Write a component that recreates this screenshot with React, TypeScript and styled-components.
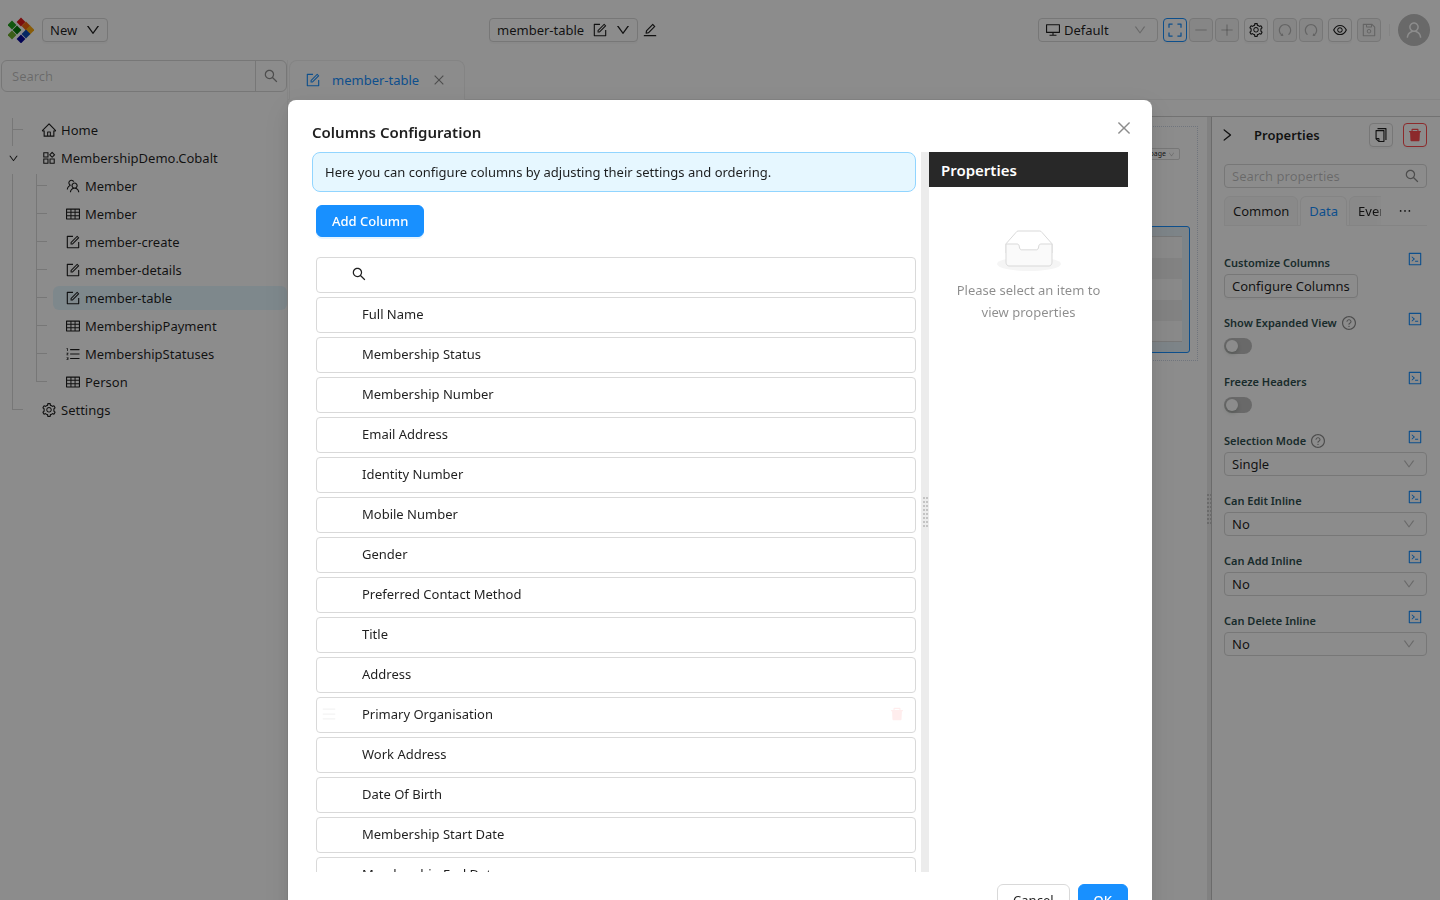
import React, { ReactNode } from "react";
import styled, { createGlobalStyle, css } from "styled-components";
import {
  AiFillDelete,
  AiOutlineClose,
  AiOutlineCode,
  AiOutlineCopy,
  AiOutlineDesktop,
  AiOutlineDown,
  AiOutlineEdit,
  AiOutlineEllipsis,
  AiOutlineExpand,
  AiOutlineEye,
  AiOutlineForm,
  AiOutlineHome,
  AiOutlineMenu,
  AiOutlineMinus,
  AiOutlineOrderedList,
  AiOutlinePlus,
  AiOutlineProduct,
  AiOutlineQuestionCircle,
  AiOutlineRedo,
  AiOutlineRight,
  AiOutlineSave,
  AiOutlineSearch,
  AiOutlineSetting,
  AiOutlineTable,
  AiOutlineTeam,
  AiOutlineUndo,
  AiOutlineUser,
} from "react-icons/ai";

const blue = "#1890ff";
const red = "#ff4d4f";
const line = "#d9d9d9";
const muted = "rgba(0, 0, 0, 0.45)";
const faint = "rgba(0, 0, 0, 0.25)";

const GlobalStyle = createGlobalStyle`
  *, *::before, *::after { box-sizing: border-box; }
  body {
    margin: 0;
    background: #fff;
    color: rgba(0, 0, 0, 0.88);
    font-family: "Segoe UI", "Noto Sans", sans-serif;
    font-size: 13px;
    line-height: 22px;
  }
  button, input, select { font: inherit; color: inherit; }
  button { cursor: pointer; }
  svg { display: block; flex: none; }
  /* the icon glyphs carry an empty rim of one pixel */
  svg[stroke="currentColor"] { margin: -1px; }
`;

/* ---------- shell ---------- */

const Shell = styled.div`
  display: flex;
  flex-direction: column;
  height: 100vh;
  overflow: hidden;
`;

const Header = styled.header`
  display: grid;
  grid-template-columns: 1fr 1fr 1fr;
  align-items: center;
  height: 60px;
  flex: none;
`;

const HeaderGroup = styled.div<{ $end?: boolean; $inset: number }>`
  display: flex;
  align-items: center;
  gap: 5px;
  justify-content: ${(p) => (p.$end ? "flex-end" : "flex-start")};
  padding: 0 ${(p) => p.$inset}px;
`;

const Logo = styled.svg`
  margin-right: 3px;
`;

const SmallButton = styled.button<{ $tone?: "primary" | "danger"; $square?: boolean }>`
  display: inline-flex;
  align-items: center;
  justify-content: center;
  gap: 9px;
  height: 24px;
  padding: 0 7px;
  border: 1px solid ${line};
  border-radius: 4px;
  background: #fff;
  box-shadow: 0 2px 0 rgba(0, 0, 0, 0.02);
  white-space: nowrap;
  ${(p) => p.$square && css`width: 24px; padding: 0;`}
  ${(p) => p.$tone === "primary" && css`border-color: ${blue}; color: ${blue};`}
  ${(p) => p.$tone === "danger" && css`border-color: ${red}; color: ${red};`}
  &:disabled {
    background: rgba(0, 0, 0, 0.04);
    color: ${faint};
    box-shadow: none;
    cursor: not-allowed;
  }
`;

const PlainButton = styled.button`
  display: inline-flex;
  align-items: center;
  justify-content: center;
  padding: 0;
  border: 0;
  background: none;
`;

const ButtonCluster = styled.div`
  display: flex;
  gap: 2px;
`;

const HeaderRule = styled.span`
  width: 1px;
  height: 12px;
  margin: 0 3px;
  background: #f0f0f0;
`;

const Avatar = styled.span`
  display: flex;
  align-items: center;
  justify-content: center;
  width: 32px;
  height: 32px;
  border-radius: 50%;
  background: #bfbfbf;
  color: #fff;
`;

const SelectFrame = styled.span<{ $width?: number }>`
  display: flex;
  align-items: center;
  gap: 4px;
  width: ${(p) => (p.$width ? `${p.$width}px` : "100%")};
  height: 24px;
  padding: 0 11px 0 7px;
  border: 1px solid ${line};
  border-radius: 4px;
  background: #fff;
  & > svg:last-child { color: ${faint}; }
`;

const NativeSelect = styled.select`
  flex: 1;
  min-width: 0;
  height: 22px;
  padding: 0;
  border: 0;
  outline: 0;
  background: none;
  appearance: none;
`;

const Body = styled.div`
  display: flex;
  flex: 1;
  min-height: 0;
`;

/* ---------- sidebar ---------- */

const Sidebar = styled.aside`
  width: 288px;
  flex: none;
  border-right: 1px solid #f4f4f4;
`;

const SearchGroup = styled.form`
  display: flex;
  height: 32px;
  margin-left: 1px;
  border: 1px solid ${line};
  border-radius: 6px;
`;

const SearchInput = styled.input`
  flex: 1;
  min-width: 0;
  padding: 0 11px 0 10px;
  border: 0;
  outline: 0;
  background: none;
  &::placeholder { color: ${faint}; opacity: 1; }
`;

const SearchButton = styled(PlainButton)`
  width: 31px;
  border-left: 1px solid ${line};
  color: ${muted};
`;

const Tree = styled.ul`
  margin: 26px 0 0;
  padding: 0;
  list-style: none;
`;

const TreeRow = styled.li`
  display: flex;
  height: 28px;
`;

type Guide = "pass" | "branch" | "end";

const GuideCell = styled.span<{ $kind: Guide }>`
  display: flex;
  flex-direction: column;
  width: 24px;
  flex: none;
  padding-left: 12px;
  &::before {
    content: "";
    width: 11px;
    height: 12px;
    border-left: 1px solid ${line};
    border-bottom: ${(p) => (p.$kind === "pass" ? "0" : `1px solid ${line}`)};
  }
  &::after {
    content: "";
    flex: 1;
    border-left: ${(p) => (p.$kind === "end" ? "0" : `1px solid ${line}`)};
  }
`;

const TreeToggle = styled(PlainButton)`
  width: 24px;
  height: 24px;
  padding-left: 2px;
`;

const TreeLink = styled.a<{ $selected?: boolean }>`
  display: flex;
  align-items: center;
  gap: 5px;
  flex: 1;
  height: 24px;
  margin-left: 5px;
  padding-left: 13px;
  border-radius: 6px;
  background: ${(p) => (p.$selected ? "#e6f7ff" : "none")};
  color: inherit;
  text-decoration: none;
`;

/* ---------- workspace ---------- */

const Workspace = styled.main`
  display: flex;
  flex-direction: column;
  flex: 1;
  min-width: 0;
`;

const TabStrip = styled.div`
  display: flex;
  height: 40px;
  flex: none;
  padding-left: 1px;
  border-bottom: 1px solid #f0f0f0;
`;

const DocumentTab = styled.div`
  display: flex;
  align-items: center;
  gap: 12px;
  height: 40px;
  width: 176px;
  padding: 0 16px;
  border: 1px solid #f0f0f0;
  border-bottom-color: #fff;
  border-radius: 8px 8px 0 0;
  background: #fff;
  color: ${blue};
  & > button { margin-left: 2px; color: ${muted}; }
`;

const Designer = styled.div`
  display: flex;
  flex: 1;
  min-height: 0;
  margin-top: 16px;
  border-top: 1px solid #cfcfcf;
`;

const Canvas = styled.section`
  flex: 1;
  min-width: 0;
  padding: 9px 9px 0 8px;
`;

const DropZone = styled.div`
  display: flex;
  flex-direction: column;
  align-items: flex-end;
  height: 235px;
  padding: 21px 7px 0;
  border: 1px dotted #ccd5e4;
`;

const PageSize = styled.button`
  display: flex;
  align-items: center;
  gap: 3px;
  height: 12px;
  margin-right: 10px;
  padding: 0 5px;
  border: 1px solid ${line};
  border-radius: 2px;
  background: #fff;
  font-size: 7px;
  line-height: 8px;
  & > svg { color: ${faint}; }
`;

const TableFrame = styled.div`
  width: 100%;
  height: 127px;
  margin-top: 66px;
  padding: 9px 7px 0;
  border: 1px solid ${blue};
  border-radius: 3px;
  background: #e4f0f8;
`;

const PreviewTable = styled.table`
  width: 100%;
  border-collapse: collapse;
  border-top: 1px solid ${line};
  border-bottom: 1px solid ${line};
  background: #fafafa;
  td { height: 21px; padding: 0; }
  tr:nth-child(even) { background: #ededed; }
`;

const Splitter = styled.div<{ $width: number }>`
  display: flex;
  align-items: center;
  justify-content: center;
  flex: none;
  width: ${(p) => p.$width}px;
  background: #ececec;
`;

const Grip = styled.span`
  display: grid;
  grid-template-columns: 2px 2px;
  gap: 2px 1px;
  & > i { height: 2px; background: #c4c4c4; }
`;

/* ---------- properties panel ---------- */

const Panel = styled.aside`
  width: 229px;
  flex: none;
  padding: 6px 13px 0 12px;
  border-left: 1px solid #c4c4c4;
`;

const PanelHeader = styled.div`
  display: flex;
  align-items: center;
  gap: 10px;
  height: 24px;
  & > button:first-child { width: 14px; margin-left: -4px; }
`;

const PanelTitle = styled.h2`
  flex: 1;
  margin: 0 0 0 10px;
  font-size: 13px;
  line-height: 24px;
  font-weight: 600;
`;

const PanelSearch = styled.label`
  display: flex;
  align-items: center;
  height: 24px;
  margin-top: 17px;
  padding-right: 7px;
  border: 1px solid ${line};
  border-radius: 4px;
  color: ${muted};
  & > input { padding: 0 7px; }
`;

const PanelTabs = styled.div`
  display: flex;
  gap: 2px;
  height: 30px;
  margin-top: 8px;
  border-bottom: 1px solid #f0f0f0;
`;

const PanelTab = styled.button<{ $active?: boolean }>`
  height: 30px;
  padding: 0 8px;
  border: 1px solid #f0f0f0;
  border-bottom-color: ${(p) => (p.$active ? "#fff" : "#f0f0f0")};
  border-radius: 6px 6px 0 0;
  background: ${(p) => (p.$active ? "#fff" : "#fafafa")};
  color: ${(p) => (p.$active ? blue : "inherit")};
`;

const CutTab = styled.div`
  width: 32px;
  height: 30px;
  overflow: hidden;
  mask-image: linear-gradient(to right, #000 80%, rgba(0, 0, 0, 0.7));
`;

const MoreTabs = styled(PlainButton)`
  flex: 1;
`;

const Fields = styled.form`
  margin-top: 26px;
`;

const Field = styled.div`
  display: grid;
  grid-template-columns: 1fr auto;
  margin-bottom: 14px;
`;

const FieldLabel = styled.label`
  display: flex;
  align-items: center;
  gap: 5px;
  height: 22px;
  color: darkslategray;
  font-size: 11px;
  font-weight: 600;
  & > svg { color: ${muted}; }
`;

const CodeToggle = styled(PlainButton)`
  width: 16px;
  height: 14px;
  margin-right: 4px;
  color: ${blue};
`;

const Control = styled.div`
  display: flex;
  align-items: center;
  grid-column: 1 / -1;
`;

const Switch = styled.input`
  display: flex;
  appearance: none;
  width: 28px;
  height: 16px;
  margin: 4px 0 3px;
  padding: 2px;
  border-radius: 8px;
  background: ${faint};
  &::before {
    content: "";
    width: 12px;
    height: 12px;
    border-radius: 50%;
    background: #fff;
    box-shadow: 0 2px 4px rgba(0, 35, 11, 0.2);
  }
`;

/* ---------- dialog ---------- */

const Mask = styled.div`
  position: fixed;
  inset: 0;
  padding-top: 100px;
  overflow: auto;
  scrollbar-width: none;
  background: rgba(0, 0, 0, 0.45);
`;

const Dialog = styled.section`
  width: 60%;
  margin: 0 auto;
  padding: 20px 24px;
  border-radius: 8px;
  background: #fff;
  box-shadow: 0 6px 16px rgba(0, 0, 0, 0.08), 0 3px 6px -4px rgba(0, 0, 0, 0.12),
    0 9px 28px 8px rgba(0, 0, 0, 0.05);
`;

const DialogHeader = styled.header`
  display: flex;
  align-items: flex-start;
  justify-content: space-between;
  height: 32px;
  & > button { width: 16px; height: 16px; margin-right: -4px; color: ${muted}; }
`;

const DialogTitle = styled.h1`
  margin: 0;
  font-size: 15px;
  line-height: 24px;
  font-weight: 600;
`;

const DialogBody = styled.div`
  display: flex;
  height: 80vh;
`;

const ColumnsPane = styled.div`
  flex: 1;
  min-width: 0;
  padding-right: 5px;
  overflow: hidden;
`;

const Notice = styled.div`
  height: 40px;
  padding: 8px 12px;
  border: 1px solid #91d5ff;
  border-radius: 8px;
  background: #e6f7ff;
`;

const Button = styled.button<{ $primary?: boolean }>`
  height: 32px;
  padding: 0 15px;
  border: 1px solid ${(p) => (p.$primary ? blue : line)};
  border-radius: 6px;
  background: ${(p) => (p.$primary ? blue : "#fff")};
  color: ${(p) => (p.$primary ? "#fff" : "inherit")};
  font-weight: ${(p) => (p.$primary ? 500 : 400)};
  box-shadow: 0 2px 0 rgba(5, 145, 255, ${(p) => (p.$primary ? 0.1 : 0)});
`;

const AddButton = styled(Button)`
  margin: 13px 0 20px 4px;
`;

const ColumnList = styled.ul`
  display: flex;
  flex-direction: column;
  gap: 4px;
  margin: 0 0 0 4px;
  padding: 0;
  list-style: none;
`;

const ColumnItem = styled.li`
  display: flex;
  align-items: center;
  height: 36px;
  padding: 0 11px 2px 5px;
  border: 1px solid ${line};
  border-radius: 4px;
`;

const DragHandle = styled.span<{ $visible?: boolean }>`
  width: 30px;
  color: #f3f3f3;
  & > svg { visibility: ${(p) => (p.$visible ? "visible" : "hidden")}; }
`;

const ColumnName = styled.span`
  flex: 1;
  padding-left: 10px;
`;

const RemoveButton = styled(PlainButton)`
  color: #ffeded;
`;

const ItemPane = styled.div`
  width: 199px;
  flex: none;
`;

const ItemPaneTitle = styled.h2`
  height: 35px;
  margin: 0;
  padding: 0 12px;
  background: #282828;
  color: #fff;
  font-size: 15px;
  line-height: 36px;
  font-weight: 600;
`;

const Empty = styled.div`
  display: flex;
  flex-direction: column;
  align-items: center;
  gap: 8px;
  margin: 43px 20px 0;
  color: ${muted};
  text-align: center;
  & > p { margin: 0; }
`;

const DialogFooter = styled.footer`
  display: flex;
  justify-content: flex-end;
  gap: 8px;
  margin-top: 12px;
`;

/* ---------- data ---------- */

const columns = [
  "Full Name",
  "Membership Status",
  "Membership Number",
  "Email Address",
  "Identity Number",
  "Mobile Number",
  "Gender",
  "Preferred Contact Method",
  "Title",
  "Address",
  "Primary Organisation",
  "Work Address",
  "Date Of Birth",
  "Membership Start Date",
  "Membership End Date",
];

interface Node {
  label: string;
  icon: ReactNode;
  guides: Guide[];
  open?: boolean;
  selected?: boolean;
}

const nodes: Node[] = [
  { label: "Home", icon: <AiOutlineHome size={16} />, guides: ["branch"] },
  { label: "MembershipDemo.Cobalt", icon: <AiOutlineProduct size={16} />, guides: [], open: true },
  { label: "Member", icon: <AiOutlineTeam size={16} />, guides: ["pass", "branch"] },
  { label: "Member", icon: <AiOutlineTable size={16} />, guides: ["pass", "branch"] },
  { label: "member-create", icon: <AiOutlineForm size={16} />, guides: ["pass", "branch"] },
  { label: "member-details", icon: <AiOutlineForm size={16} />, guides: ["pass", "branch"] },
  { label: "member-table", icon: <AiOutlineForm size={16} />, guides: ["pass", "branch"], selected: true },
  { label: "MembershipPayment", icon: <AiOutlineTable size={16} />, guides: ["pass", "branch"] },
  { label: "MembershipStatuses", icon: <AiOutlineOrderedList size={16} />, guides: ["pass", "branch"] },
  { label: "Person", icon: <AiOutlineTable size={16} />, guides: ["pass", "end"] },
  { label: "Settings", icon: <AiOutlineSetting size={16} />, guides: ["end"] },
];

const fields = [
  { id: "expanded", label: "Show Expanded View", help: true },
  { id: "freeze", label: "Freeze Headers" },
  { id: "selection", label: "Selection Mode", help: true, value: "Single" },
  { id: "edit", label: "Can Edit Inline", value: "No" },
  { id: "add", label: "Can Add Inline", value: "No" },
  { id: "delete", label: "Can Delete Inline", value: "No" },
];

/* ---------- parts ---------- */

const tiles = [
  [13, 5, "#e01a1a"],
  [18, 9, "#f0640f"],
  [22, 13, "#f7a810"],
  [18, 17, "#0a45b4"],
  [13, 22, "#07079a"],
  [4, 8, "#1f9e1c"],
  [9, 13, "#057a08"],
  [4, 18, "#6cab2c"],
] as const;

function BrandLogo() {
  return (
    <Logo width="26" height="26" viewBox="0 0 26 26" role="img" aria-label="Home">
      {tiles.map(([x, y, fill]) => (
        <path key={fill} fill={fill} d={`M${x} ${y - 4.4}l4.4 4.4l-4.4 4.4l-4.4 -4.4z`} />
      ))}
    </Logo>
  );
}

function EmptyBox() {
  return (
    <svg width="64" height="41" viewBox="0 0 64 41" aria-hidden="true">
      <g transform="translate(0 1)" fill="none" fillRule="evenodd">
        <ellipse fill="#f5f5f5" cx="32" cy="33" rx="32" ry="7" />
        <g fillRule="nonzero" stroke="#d9d9d9">
          <path
            fill="#fff"
            d="M55 12.76L44.854 1.258C44.367.474 43.656 0 42.907 0H21.093c-.749 0-1.46.474-1.947 1.257L9 12.761V22h46v-9.24z"
          />
          <path
            fill="#fafafa"
            d="M41.613 15.931c0-1.605.994-2.93 2.227-2.931H55v18.137C55 33.26 53.68 35 52.05 35h-40.1C10.32 35 9 33.259 9 31.137V13h11.16c1.233 0 2.227 1.323 2.227 2.928v.022c0 1.605 1.005 2.901 2.237 2.901h14.752c1.232 0 2.237-1.308 2.237-2.913v-.007z"
          />
        </g>
      </g>
    </svg>
  );
}

function GripDots({ rows }: { rows: number }) {
  return <Grip>{Array.from({ length: rows * 2 }, (_, i) => <i key={i} />)}</Grip>;
}

function Dropdown(props: { id?: string; value: string; icon?: ReactNode; width?: number }) {
  return (
    <SelectFrame $width={props.width}>
      {props.icon}
      <NativeSelect id={props.id} aria-label={props.id ? undefined : props.value}>
        <option>{props.value}</option>
      </NativeSelect>
      <AiOutlineDown size={14} />
    </SelectFrame>
  );
}

function CodeSwitch() {
  return (
    <CodeToggle type="button" aria-label="Use script">
      <AiOutlineCode size={16} />
    </CodeToggle>
  );
}

function TopBar() {
  return (
    <Header>
      <HeaderGroup $inset={8}>
        <BrandLogo />
        <SmallButton>
          New <AiOutlineDown size={16} />
        </SmallButton>
      </HeaderGroup>
      <HeaderGroup $inset={9}>
        <SmallButton>
          member-table <AiOutlineForm size={16} /> <AiOutlineDown size={16} />
        </SmallButton>
        <PlainButton aria-label="Rename">
          <AiOutlineEdit size={16} />
        </PlainButton>
      </HeaderGroup>
      <HeaderGroup $end $inset={10}>
        <Dropdown value="Default" width={120} icon={<AiOutlineDesktop size={16} />} />
        <ButtonCluster>
          <SmallButton $square $tone="primary" aria-label="Fit"><AiOutlineExpand size={16} /></SmallButton>
          <SmallButton $square disabled aria-label="Zoom out"><AiOutlineMinus size={16} /></SmallButton>
          <SmallButton $square disabled aria-label="Zoom in"><AiOutlinePlus size={16} /></SmallButton>
        </ButtonCluster>
        <SmallButton $square aria-label="Settings"><AiOutlineSetting size={16} /></SmallButton>
        <ButtonCluster>
          <SmallButton $square disabled aria-label="Undo"><AiOutlineUndo size={16} /></SmallButton>
          <SmallButton $square disabled aria-label="Redo"><AiOutlineRedo size={16} /></SmallButton>
        </ButtonCluster>
        <SmallButton $square aria-label="Preview"><AiOutlineEye size={16} /></SmallButton>
        <SmallButton $square disabled aria-label="Save"><AiOutlineSave size={16} /></SmallButton>
        <HeaderRule />
        <Avatar><AiOutlineUser size={20} /></Avatar>
      </HeaderGroup>
    </Header>
  );
}

function Explorer() {
  return (
    <Sidebar>
      <SearchGroup role="search">
        <SearchInput placeholder="Search" aria-label="Search" />
        <SearchButton type="button" aria-label="Search"><AiOutlineSearch size={16} /></SearchButton>
      </SearchGroup>
      <Tree>
        {nodes.map((node, i) => (
          <TreeRow key={i}>
            {node.guides.map((kind, g) => <GuideCell key={g} $kind={kind} />)}
            {node.open && <TreeToggle aria-label="Collapse"><AiOutlineDown size={11} /></TreeToggle>}
            <TreeLink href="#" $selected={node.selected}>
              {node.icon}
              {node.label}
            </TreeLink>
          </TreeRow>
        ))}
      </Tree>
    </Sidebar>
  );
}

function PropertiesPanel() {
  return (
    <Panel>
      <PanelHeader>
        <PlainButton aria-label="Collapse panel"><AiOutlineRight size={16} /></PlainButton>
        <PanelTitle>Properties</PanelTitle>
        <SmallButton $square aria-label="Copy"><AiOutlineCopy size={16} /></SmallButton>
        <SmallButton $square $tone="danger" aria-label="Delete"><AiFillDelete size={16} /></SmallButton>
      </PanelHeader>
      <PanelSearch>
        <SearchInput placeholder="Search properties" aria-label="Search properties" />
        <AiOutlineSearch size={16} />
      </PanelSearch>
      <PanelTabs>
        <PanelTab>Common</PanelTab>
        <PanelTab $active>Data</PanelTab>
        <CutTab><PanelTab>Events</PanelTab></CutTab>
        <MoreTabs aria-label="More"><AiOutlineEllipsis size={16} /></MoreTabs>
      </PanelTabs>
      <Fields>
        <Field>
          <FieldLabel htmlFor="configure">Customize Columns</FieldLabel>
          <CodeSwitch />
          <Control><SmallButton id="configure" type="button">Configure Columns</SmallButton></Control>
        </Field>
        {fields.map((field) => (
          <Field key={field.id}>
            <FieldLabel htmlFor={field.id}>
              {field.label}
              {field.help && <AiOutlineQuestionCircle size={16} />}
            </FieldLabel>
            <CodeSwitch />
            <Control>
              {field.value ? (
                <Dropdown id={field.id} value={field.value} />
              ) : (
                <Switch id={field.id} type="checkbox" role="switch" />
              )}
            </Control>
          </Field>
        ))}
      </Fields>
    </Panel>
  );
}

function ColumnsDialog() {
  return (
    <Mask>
      <Dialog role="dialog" aria-modal="true" aria-labelledby="dialog-title">
        <DialogHeader>
          <DialogTitle id="dialog-title">Columns Configuration</DialogTitle>
          <PlainButton aria-label="Close"><AiOutlineClose size={18} /></PlainButton>
        </DialogHeader>
        <DialogBody>
          <ColumnsPane>
            <Notice>Here you can configure columns by adjusting their settings and ordering.</Notice>
            <AddButton $primary>Add Column</AddButton>
            <ColumnList>
              <ColumnItem>
                <DragHandle />
                <AiOutlineSearch size={16} />
              </ColumnItem>
              {columns.map((name) => {
                const hovered = name === "Primary Organisation";
                return (
                  <ColumnItem key={name}>
                    <DragHandle $visible={hovered}><AiOutlineMenu size={16} /></DragHandle>
                    <ColumnName>{name}</ColumnName>
                    {hovered && <RemoveButton aria-label="Remove"><AiFillDelete size={16} /></RemoveButton>}
                  </ColumnItem>
                );
              })}
            </ColumnList>
          </ColumnsPane>
          <Splitter $width={8}><GripDots rows={8} /></Splitter>
          <ItemPane>
            <ItemPaneTitle>Properties</ItemPaneTitle>
            <Empty>
              <EmptyBox />
              <p>Please select an item to view properties</p>
            </Empty>
          </ItemPane>
        </DialogBody>
        <DialogFooter>
          <Button>Cancel</Button>
          <Button $primary>OK</Button>
        </DialogFooter>
      </Dialog>
    </Mask>
  );
}

export default function App() {
  return (
    <>
      <GlobalStyle />
      <Shell>
        <TopBar />
        <Body>
          <Explorer />
          <Workspace>
            <TabStrip>
              <DocumentTab>
                <AiOutlineForm size={16} />
                member-table
                <PlainButton aria-label="Close tab"><AiOutlineClose size={14} /></PlainButton>
              </DocumentTab>
            </TabStrip>
            <Designer>
              <Canvas>
                <DropZone>
                  <PageSize>10 / page <AiOutlineDown size={7} /></PageSize>
                  <TableFrame>
                    <PreviewTable>
                      <tbody>
                        {Array.from({ length: 5 }, (_, i) => <tr key={i}><td /></tr>)}
                      </tbody>
                    </PreviewTable>
                  </TableFrame>
                </DropZone>
              </Canvas>
              <Splitter $width={4}><GripDots rows={8} /></Splitter>
              <PropertiesPanel />
            </Designer>
          </Workspace>
        </Body>
      </Shell>
      <ColumnsDialog />
    </>
  );
}
